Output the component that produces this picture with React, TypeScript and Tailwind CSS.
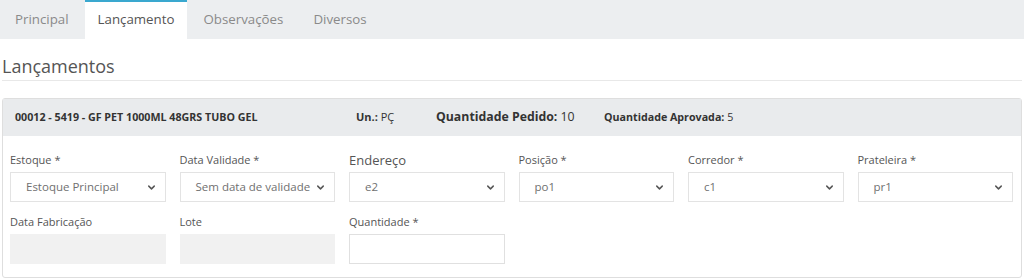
import { ChevronDown } from "lucide-react";

const tabs = ["Principal", "Lançamento", "Observações", "Diversos"];

function SelectBox({ value }: { value: string }) {
  return (
    <div className="flex h-[30px] items-center justify-between border border-[#e3e3e3] bg-white pl-[15px] pr-[8px] text-[11.5px] text-[#707070]">
      <span className="whitespace-nowrap">{value}</span>
      <ChevronDown className="ml-1 h-[11px] w-[11px] shrink-0 text-[#555]" strokeWidth={3.2} />
    </div>
  );
}

function Field({
  label,
  big,
  children,
}: {
  label: string;
  big?: boolean;
  children: React.ReactNode;
}) {
  return (
    <div className="flex flex-col">
      <label
        className={
          big
            ? "mb-[2px] h-[20px] text-[13px] leading-[20px] text-[#555]"
            : "mb-[2px] h-[20px] text-[11px] leading-[20px] text-[#555]"
        }
      >
        {label}
      </label>
      {children}
    </div>
  );
}

export default function App() {
  return (
    <div className="min-h-[279px] bg-white font-['Open_Sans',sans-serif] text-[#555]">
      <div className="flex h-[39px] items-end bg-[#eceef0] pl-[1px]">
        {tabs.map((t) => (
          <div
            key={t}
            className={
              t === "Lançamento"
                ? "mr-[2px] flex h-[39px] items-center border-t-2 border-[#3aa8cf] bg-white px-[13px] pb-[1px] text-[13.3px] text-[#555]"
                : "mr-[2px] flex h-[39px] items-center px-[14px] text-[13.3px] text-[#8a8a8a]"
            }
          >
            {t}
          </div>
        ))}
      </div>

      <h3 className="mx-[2px] mt-[14px] border-b border-[#e8e8e8] pb-[1px] text-[18px] leading-[26px] text-[#555]">
        Lançamentos
      </h3>

      <div className="mx-[2px] mt-[17px] rounded-[3px] border border-[#dedede]">
        <div className="flex h-[37px] items-center bg-[#e9ebed] pl-[12px] text-[#333]">
          <span className="w-[341px] text-[10.7px] font-bold">
            00012 - 5419 - GF PET 1000ML 48GRS TUBO GEL
          </span>
          <span className="w-[80px] text-[11px]">
            <b>Un.:</b> PÇ
          </span>
          <span className="w-[168px] text-[12.3px]">
            <b>Quantidade Pedido:</b> 10
          </span>
          <span className="text-[10.7px]">
            <b>Quantidade Aprovada:</b> 5
          </span>
        </div>

        <div className="grid grid-cols-6 gap-x-[14px] gap-y-[10px] pl-[7px] pr-[8px] pt-[14px] pb-[13px]">
          <Field label="Estoque *">
            <SelectBox value="Estoque Principal" />
          </Field>
          <Field label="Data Validade *">
            <SelectBox value="Sem data de validade" />
          </Field>
          <Field label="Endereço" big>
            <SelectBox value="e2" />
          </Field>
          <Field label="Posição *">
            <SelectBox value="po1" />
          </Field>
          <Field label="Corredor *">
            <SelectBox value="c1" />
          </Field>
          <Field label="Prateleira *">
            <SelectBox value="pr1" />
          </Field>

          <Field label="Data Fabricação">
            <div className="h-[30px] bg-[#f1f1f1]" />
          </Field>
          <Field label="Lote">
            <div className="h-[30px] bg-[#f1f1f1]" />
          </Field>
          <Field label="Quantidade *">
            <div className="h-[30px] border border-[#e0e0e0] bg-white" />
          </Field>
        </div>
      </div>
    </div>
  );
}
